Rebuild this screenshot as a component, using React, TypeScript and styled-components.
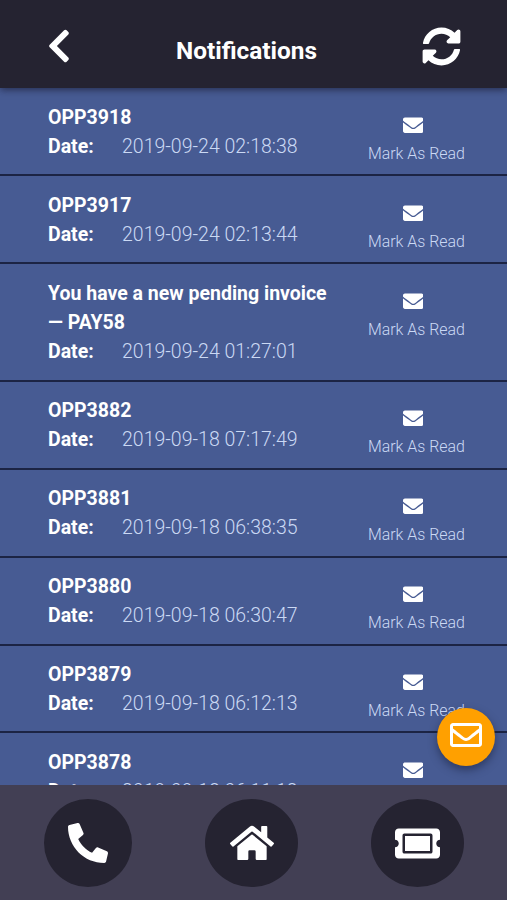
import React from "react";
import styled, { createGlobalStyle } from "styled-components";
import {
  FaChevronLeft,
  FaSyncAlt,
  FaEnvelope,
  FaRegEnvelope,
  FaPhone,
  FaHome,
  FaTicketAlt,
} from "react-icons/fa";

const GlobalStyle = createGlobalStyle`
  * { box-sizing: border-box; }
  body { margin: 0; background: #475b93; font-family: Roboto, sans-serif; }
  button { border: 0; padding: 0; background: none; color: inherit; font: inherit; }
`;

const Screen = styled.div`
  position: relative;
  display: flex;
  flex-direction: column;
  width: 507px;
  height: 900px;
  overflow: hidden;
  background: #475b93;
  color: #fff;
`;

const Header = styled.header`
  flex: none;
  z-index: 1;
  display: grid;
  grid-template-columns: 117px 1fr 131px;
  height: 88.4px;
  background: #252331;
  box-shadow: 0 2px 7px rgba(20, 20, 40, 0.6);
`;

const HeaderButton = styled.button`
  display: flex;
  align-items: flex-start;
  justify-content: center;
  padding-top: 26.5px;
  svg { display: block; }
`;

const Title = styled.h1`
  margin: 0;
  padding-top: 13px;
  text-align: center;
  font-size: 24.4px;
  font-weight: 700;
  line-height: 75px;
  white-space: nowrap;
`;

const List = styled.main`
  flex: 1;
  min-height: 0;
  overflow: hidden;
`;

const Row = styled.article`
  display: grid;
  grid-template-columns: 285px 1fr;
  padding: 14.2px 0 13.2px 48px;
  border-bottom: 2px solid #1c2444;
`;

const Subject = styled.h2`
  margin: 0;
  font-size: 19.5px;
  font-weight: 700;
  line-height: 29.3px;
`;

const DateLine = styled.div`
  display: flex;
  font-size: 19.5px;
  line-height: 29.3px;
  white-space: nowrap;
`;

const DateLabel = styled.span`
  width: 74px;
  font-weight: 700;
`;

const DateValue = styled.span`
  font-weight: 300;
  color: #cbd9f4;
`;

const MarkRead = styled.button`
  display: flex;
  flex-direction: column;
  align-items: flex-start;
  align-self: start;
  height: 58px;
  padding: 12.7px 0 0 35px;
  color: #cbd9f4;
  font-size: 15.9px;
  font-weight: 300;
  line-height: 20px;
  white-space: nowrap;
  svg { display: block; flex: none; margin: 0 0 7.8px 34.5px; color: #fff; }
`;

const ComposeButton = styled.button`
  position: absolute;
  z-index: 2;
  left: 437px;
  top: 708px;
  display: flex;
  align-items: center;
  justify-content: center;
  width: 58px;
  height: 58px;
  padding-bottom: 4px;
  border-radius: 50%;
  background: #ffa000;
  box-shadow: 0 4px 8px rgba(20, 25, 50, 0.5);
`;

const TabBar = styled.nav`
  flex: none;
  display: flex;
  justify-content: space-between;
  height: 115px;
  padding: 14px 43px 0 44px;
  background: #423f54;
`;

const Tab = styled.button<{ $width: number; $flip?: boolean }>`
  display: flex;
  align-items: center;
  justify-content: center;
  width: ${(p) => p.$width}px;
  height: 88px;
  border-radius: 50%;
  background: #252331;
  svg { display: block; transform: ${(p) => (p.$flip ? "scaleX(-1)" : "none")}; }
`;

const notifications = [
  { subject: "OPP3918", date: "2019-09-24 02:18:38" },
  { subject: "OPP3917", date: "2019-09-24 02:13:44" },
  { subject: "You have a new pending invoice — PAY58", date: "2019-09-24 01:27:01" },
  { subject: "OPP3882", date: "2019-09-18 07:17:49" },
  { subject: "OPP3881", date: "2019-09-18 06:38:35" },
  { subject: "OPP3880", date: "2019-09-18 06:30:47" },
  { subject: "OPP3879", date: "2019-09-18 06:12:13" },
  { subject: "OPP3878", date: "2019-09-18 06:11:12" },
];

export default function App() {
  return (
    <Screen>
      <GlobalStyle />
      <Header>
        <HeaderButton aria-label="Back">
          <FaChevronLeft size={38} />
        </HeaderButton>
        <Title>Notifications</Title>
        <HeaderButton aria-label="Refresh">
          <FaSyncAlt size={39} />
        </HeaderButton>
      </Header>
      <List>
        {notifications.map((n) => (
          <Row key={n.subject}>
            <div>
              <Subject>{n.subject}</Subject>
              <DateLine>
                <DateLabel>Date:</DateLabel>
                <DateValue>{n.date}</DateValue>
              </DateLine>
            </div>
            <MarkRead>
              <FaEnvelope size={20.5} />
              Mark As Read
            </MarkRead>
          </Row>
        ))}
      </List>
      <ComposeButton aria-label="Messages">
        <FaRegEnvelope size={32} />
      </ComposeButton>
      <TabBar>
        <Tab $width={88} $flip aria-label="Call">
          <FaPhone size={40} />
        </Tab>
        <Tab $width={93} aria-label="Home">
          <FaHome size={44} />
        </Tab>
        <Tab $width={93} aria-label="Tickets">
          <FaTicketAlt size={45} />
        </Tab>
      </TabBar>
    </Screen>
  );
}
